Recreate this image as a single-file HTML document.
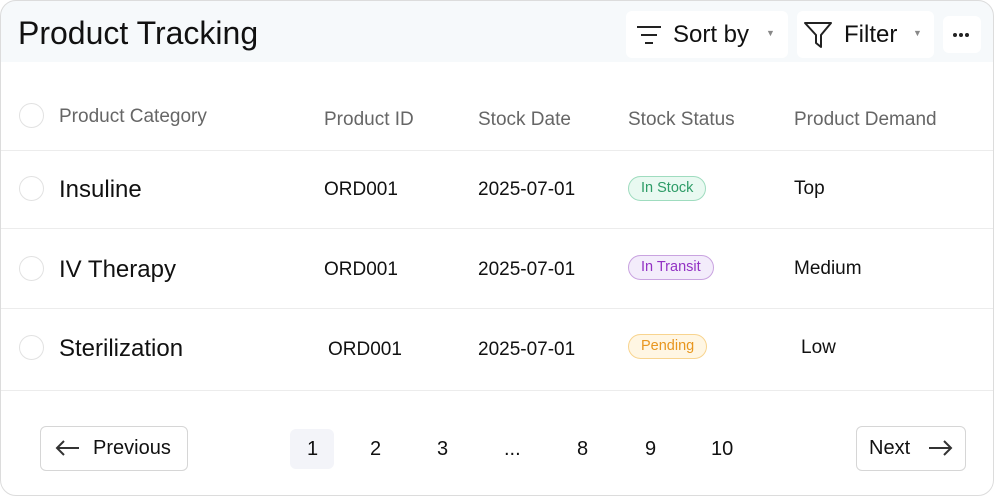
<!DOCTYPE html>
<html><head><style>
*{box-sizing:border-box;margin:0;padding:0}
body{width:994px;height:497px;background:#fff;font-family:"Liberation Sans",sans-serif;position:relative;overflow:hidden;color:#111}
.card{position:absolute;left:0;top:0;width:994px;height:496px;border-radius:16px;overflow:hidden;background:#fff}
.border{position:absolute;left:0;top:0;width:994px;height:496px;border:1px solid #dcdcdc;border-radius:16px;pointer-events:none}
.head{position:absolute;left:0;top:0;width:994px;height:62px;background:#f6f9fb}
.a{position:absolute;white-space:nowrap}
.btn{position:absolute;background:#fff;border-radius:6px}
.line{position:absolute;left:0;width:994px;height:1px;background:#ececec}
.rad{position:absolute;left:19px;width:25px;height:25px;border:1.5px solid #e2e2e2;border-radius:50%}
.th{font-size:19px;color:#666}
.pill{position:absolute;height:25px;border-radius:13px;font-size:14.5px;line-height:23px;padding:0 12px;border:1px solid}
.pg{position:absolute;font-size:20px;top:438px}
.nb{position:absolute;top:426px;height:45px;border:1.5px solid #d6d6d6;border-radius:6px;font-size:20px;line-height:42px}
</style></head><body><div class="card">
<div class="head"></div>
<div class="a" style="left:18px;top:15px;font-size:32px">Product Tracking</div>
<div class="btn" style="left:626px;top:11px;width:162px;height:47px"></div>
<svg class="a" style="left:636px;top:24px" width="26" height="22"><g stroke="#222" stroke-width="2"><line x1="1" y1="3" x2="25" y2="3"/><line x1="5" y1="11" x2="21" y2="11"/><line x1="9" y1="19" x2="17" y2="19"/></g></svg>
<div class="a" style="left:673px;top:21px;font-size:24px">Sort by</div>
<div class="a" style="left:766px;top:28px;font-size:9px;color:#888">▼</div>
<div class="btn" style="left:797px;top:11px;width:137px;height:47px"></div>
<svg class="a" style="left:803px;top:21px" width="30" height="28"><path d="M2 2H28L18 14V26L13 22V14Z" fill="none" stroke="#222" stroke-width="2" stroke-linejoin="round"/></svg>
<div class="a" style="left:844px;top:21px;font-size:24px">Filter</div>
<div class="a" style="left:913px;top:28px;font-size:9px;color:#888">▼</div>
<div class="btn" style="left:943px;top:16px;width:38px;height:37px"></div>
<svg class="a" style="left:952px;top:32px" width="18" height="6"><circle cx="3" cy="3" r="2" fill="#222"/><circle cx="9" cy="3" r="2" fill="#222"/><circle cx="15" cy="3" r="2" fill="#222"/></svg>

<div class="rad" style="top:103px"></div>
<div class="a th" style="left:59px;top:106px">Product Category</div>
<div class="a th" style="left:324px;top:109px">Product ID</div>
<div class="a th" style="left:478px;top:109px">Stock Date</div>
<div class="a th" style="left:628px;top:109px">Stock Status</div>
<div class="a th" style="left:794px;top:109px">Product Demand</div>
<div class="line" style="top:150px"></div>

<div class="rad" style="top:176px"></div>
<div class="a" style="left:59px;top:176px;font-size:24px">Insuline</div>
<div class="a" style="left:324px;top:179px;font-size:19px">ORD001</div>
<div class="a" style="left:478px;top:179px;font-size:19px">2025-07-01</div>
<div class="pill" style="left:628px;top:176px;background:#e9f9f1;border-color:#9fdcbf;color:#2e9c67">In Stock</div>
<div class="a" style="left:794px;top:178px;font-size:19px">Top</div>
<div class="line" style="top:228px"></div>

<div class="rad" style="top:256px"></div>
<div class="a" style="left:59px;top:256px;font-size:24px">IV Therapy</div>
<div class="a" style="left:324px;top:259px;font-size:19px">ORD001</div>
<div class="a" style="left:478px;top:259px;font-size:19px">2025-07-01</div>
<div class="pill" style="left:628px;top:255px;background:#f3ecfb;border-color:#c9a3e0;color:#9333c4">In Transit</div>
<div class="a" style="left:794px;top:258px;font-size:19px">Medium</div>
<div class="line" style="top:308px"></div>

<div class="rad" style="top:335px"></div>
<div class="a" style="left:59px;top:335px;font-size:24px">Sterilization</div>
<div class="a" style="left:328px;top:339px;font-size:19px">ORD001</div>
<div class="a" style="left:478px;top:339px;font-size:19px">2025-07-01</div>
<div class="pill" style="left:628px;top:334px;background:#fff6e3;border-color:#f8d48f;color:#e8961e">Pending</div>
<div class="a" style="left:801px;top:337px;font-size:19px">Low</div>
<div class="line" style="top:390px"></div>

<div class="nb" style="left:40px;width:148px"><svg style="position:absolute;left:14px;top:13px" width="26" height="16"><path d="M2 8H24M9 1L2 8L9 15" fill="none" stroke="#333" stroke-width="2"/></svg><span style="position:absolute;left:52px;top:0">Previous</span></div>
<div class="a" style="left:290px;top:429px;width:44px;height:40px;background:#f3f4f9;border-radius:6px"></div>
<div class="pg" style="left:307px">1</div>
<div class="pg" style="left:370px">2</div>
<div class="pg" style="left:437px">3</div>
<div class="pg" style="left:504px">...</div>
<div class="pg" style="left:577px">8</div>
<div class="pg" style="left:645px">9</div>
<div class="pg" style="left:711px">10</div>
<div class="nb" style="left:856px;width:110px"><span style="position:absolute;left:12px;top:0">Next</span><svg style="position:absolute;left:70px;top:13px" width="26" height="16"><path d="M2 8H24M17 1L24 8L17 15" fill="none" stroke="#333" stroke-width="2"/></svg></div>
</div><div class="border"></div></body></html>
